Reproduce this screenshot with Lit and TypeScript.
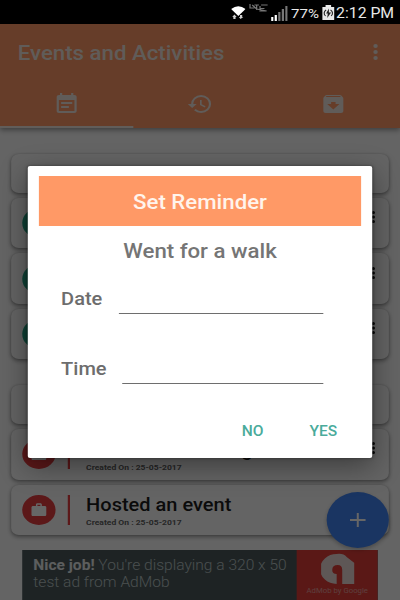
import { LitElement, html, css, svg } from "lit";
import { customElement } from "lit/decorators.js";

interface Row {
  kind: "heading" | "done" | "work";
  title?: string;
  created?: string;
}

const ROWS: Row[] = [
  { kind: "heading" },
  { kind: "done" },
  { kind: "done" },
  { kind: "done" },
  { kind: "heading" },
  { kind: "work", title: "Planned a meeting", created: "Created On : 25-05-2017" },
  { kind: "work", title: "Hosted an event", created: "Created On : 25-05-2017" },
];

const ICONS = {
  event: svg`<path d="M17 10H7v2h10v-2zm2-7h-1V1h-2v2H8V1H6v2H5c-1.11 0-1.99.9-1.99 2L3 19c0 1.1.89 2 2 2h14c1.1 0 2-.9 2-2V5c0-1.1-.9-2-2-2zm0 16H5V8h14v11zm-5-5H7v2h7v-2z"/>`,
  history: svg`<path d="M13 3a9 9 0 0 0-9 9H1l3.89 3.89.07.14L9 12H6c0-3.87 3.13-7 7-7s7 3.13 7 7-3.13 7-7 7c-1.93 0-3.68-.79-4.94-2.06l-1.42 1.42A8.954 8.954 0 0 0 13 21a9 9 0 0 0 0-18zm-1 5v5l4.28 2.54.72-1.21-3.5-2.08V8H12z"/>`,
  archive: svg`<path d="M20.540 5.230l-1.390-1.680C18.880 3.210 18.470 3 18 3H6c-.47 0-.88.21-1.160.55L3.460 5.230C3.170 5.570 3 6.020 3 6.500V19c0 1.100.9 2 2 2h14c1.100 0 2-.9 2-2V6.500c0-.48-.17-.93-.46-1.270zM12 17.500L6.500 12H10v-2h4v2h3.500L12 17.500zM5.120 5l.81-1h12l.94 1H5.120z"/>`,
  more: svg`<path d="M12 8a2 2 0 1 0 0-4 2 2 0 0 0 0 4zm0 2a2 2 0 1 0 0 4 2 2 0 0 0 0-4zm0 6a2 2 0 1 0 0 4 2 2 0 0 0 0-4z"/>`,
  work: svg`<path d="M20 6h-4V4c0-1.11-.89-2-2-2h-4c-1.110 0-2 .89-2 2v2H4c-1.110 0-1.990.89-1.990 2L2 19c0 1.110.89 2 2 2h16c1.110 0 2-.89 2-2V8c0-1.110-.89-2-2-2zm-6 0h-4V4h4v2z"/>`,
  plus: svg`<path d="M19 12.900h-6.100V19h-1.800v-6.100H5v-1.800h6.100V5h1.800v6.100H19z"/>`,
};

const icon = (name: keyof typeof ICONS, cls = "") =>
  html`<svg class="icon ${cls}" viewBox="0 0 24 24">${ICONS[name]}</svg>`;

@customElement("app-root")
export class AppRoot extends LitElement {
  static styles = css`
    :host {
      display: block;
      width: 400px;
      height: 600px;
      overflow: hidden;
      background: #000;
    }
    * { box-sizing: border-box; }
    .screen {
      position: relative;
      width: 360px;
      height: 600px;
      display: flex;
      flex-direction: column;
      transform: scaleX(1.11111);
      transform-origin: 0 0;
      font-family: Roboto, "Liberation Sans", sans-serif;
      overflow: hidden;
    }
    .icon { width: 24px; height: 24px; fill: currentColor; display: block; flex: none; }

    .status {
      height: 24px;
      flex: none;
      background: #000;
      color: #e8e8e8;
      display: flex;
      align-items: center;
      padding-left: 207.500px;
      line-height: 24px;
      white-space: nowrap;
    }
    .status > * { flex: none; }
    .wifi { width: 13px; height: 15px; margin-right: 3.500px; }
    .lte { width: 17px; height: 9px; margin: 0 3px 10px 0; }
    .bars { width: 15px; height: 15px; margin: 2px 3px 0 0; }
    .battery { width: 11px; height: 15px; margin-right: 2px; }
    .pct { font-size: 13.500px; width: 27.500px; padding-top: 1px; }
    .clock { font-size: 14.200px; padding-top: 1px; }

    .page { position: relative; flex: 1; background: #fafafa; display: flex; flex-direction: column; }
    .bar {
      flex: none;
      height: 104px;
      background: #ff9966;
      color: #fff;
      box-shadow: 0 2px 5px rgba(0, 0, 0, 0.4);
    }
    .toolbar { height: 56px; display: flex; align-items: center; justify-content: space-between; padding: 0 10px 0 16px; color: #f0e5df; }
    .name { font-size: 20px; font-weight: 500; padding-top: 2px; }
    .tabs { height: 48px; display: grid; grid-template-columns: repeat(3, 1fr); }
    .tab { display: flex; align-items: center; justify-content: center; color: #f0e5df; }
    .tab.on { border-bottom: 2px solid #f3e8e2; padding-top: 2px; }
    .list { padding: 26px 10px 0; display: flex; flex-direction: column; gap: 5px; }
    .card {
      height: 50.400px;
      border-radius: 7px;
      background: #fafafa;
      box-shadow: 0 2px 4px rgba(0, 0, 0, 0.38), 0 0 2px rgba(0, 0, 0, 0.16);
      display: flex;
      align-items: center;
      padding: 0 0 0 10px;
    }
    .card.heading { height: 39px; }
    .card.heading.next { margin-top: 21px; }
    .dot {
      width: 30px;
      height: 30px;
      border-radius: 50%;
      background: #e53c40;
      color: #fff;
      display: flex;
      align-items: center;
      justify-content: center;
    }
    .dot.done { background: #26a688; }
    .dot .icon { width: 16px; height: 16px; }
    .rule { width: 2px; height: 30px; margin: 0 15px 0 10.500px; background: #e53c40; }
    .body { flex: 1; }
    .what { font-size: 18px; line-height: 21px; font-weight: 500; color: #1c1c1c; padding-top: 3px; }
    .when { font-size: 7.700px; line-height: 11px; margin-top: 2px; font-weight: 700; color: #606060; }
    .menu { width: 18px; height: 18px; color: #111; margin: -12px 5px 0 auto; }

    .ad {
      position: absolute;
      left: 20px;
      bottom: 0;
      width: 320px;
      height: 50px;
      display: flex;
      background: #4b595b;
      color: #b9c4c5;
      overflow: hidden;
    }
    .copy { flex: 1; padding: 7px 0 0 10px; font-size: 14px; line-height: 17px; white-space: nowrap; font-weight: 300; }
    .copy b { font-weight: 700; color: #e6eaea; }
    .brand { flex: none; width: 73px; background: #e03e39; color: #ead9d8; display: flex; flex-direction: column; align-items: center; padding-top: 3px; }
    .brand svg { width: 30px; height: 32px; }
    .by { font-size: 7px; line-height: 9px; margin-top: 2px; color: #e99f9b; white-space: nowrap; }
    .fab {
      position: absolute;
      right: 10px;
      bottom: 52px;
      width: 56px;
      height: 56px;
      border-radius: 50%;
      background: #4285f4;
      color: #fff;
      display: flex;
      align-items: center;
      justify-content: center;
      box-shadow: 0 2px 4px rgba(0, 0, 0, 0.25);
    }
    .scrim { position: absolute; inset: 0; background: rgba(0, 0, 0, 0.6); }

    .dialog {
      position: absolute;
      left: 25px;
      top: 166px;
      width: 310px;
      height: 292px;
      border-radius: 2px;
      background: #fff;
      color: #757575;
      padding: 10px 10px 0;
      box-shadow: 0 8px 26px rgba(0, 0, 0, 0.4), 0 0 3px rgba(0, 0, 0, 0.4);
    }
    .banner {
      height: 50px;
      background: #ff9966;
      color: #fff4ec;
      font-size: 20px;
      font-weight: 500;
      line-height: 52px;
      text-align: center;
    }
    .subject { font-size: 20px; font-weight: 500; line-height: 24px; margin-top: 13px; text-align: center; }
    .field { display: flex; align-items: flex-end; padding: 0 34px 0 20px; height: 51px; font-size: 18px; font-weight: 500; color: #6d6d6d; }
    .field + .field { margin-top: 18.500px; }
    .field label { line-height: 24px; padding-bottom: 3px; white-space: nowrap; margin-right: 14.500px; }
    .field .input { flex: 1; border-bottom: 1px solid #6e6e6e; }
    .actions { display: flex; justify-content: flex-end; gap: 41.500px; margin-top: 37px; padding-right: 21.500px; font-size: 14px; line-height: 20px; font-weight: 500; color: #4aab9b; }
  `;

  private row(r: Row, i: number) {
    if (r.kind === "heading") return html`<div class="card heading ${i ? "next" : ""}"></div>`;
    return html`<div class="card">
      <div class="dot ${r.kind}">${icon("work")}</div>
      <div class="rule"></div>
      <div class="body">
        ${r.title ? html`<div class="what">${r.title}</div><div class="when">${r.created}</div>` : ""}
      </div>
      ${i < ROWS.length - 1 ? icon("more", "menu") : ""}
    </div>`;
  }

  render() {
    return html`<div class="screen">
      <div class="status">
        <svg class="wifi" viewBox="0 0 13 15" fill="#fff">
          <path d="M0 4Q6.500-1.500 13 4L6.500 11z" />
          <path d="M3 9.500l2 2.500H4v2H2v-2H1zM8.500 14l-1.500-2h1v-2h2v2h1z" opacity=".8" />
        </svg>
        <svg class="lte" viewBox="0 0 17 9" fill="none" stroke="#777" stroke-width="1.100">
          <path d="M1 1v4h4M5 2h4M7 2v5M10 3v5h4M10 5.500h4M11 2h6M3 2l4 4 9 2" />
        </svg>
        <svg class="bars" viewBox="0 0 15 15">
          <path fill="#fff" d="M0 11h2v4H0zM3.200 9h2v6h-2z" />
          <path fill="#777" d="M6.400 6h2v9h-2zM9.600 3h2v12h-2zM12.800 0h2v15h-2z" />
        </svg>
        <span class="pct">77%</span>
        <svg class="battery" viewBox="0 0 11 15">
          <path fill="#e8e8e8" d="M3 0h5v2h3v13H0V2h3z" />
          <path d="M3.500 5A3.800 3.800 0 0 0 3 11M7.500 5a3.800 3.800 0 0 1 .5 6" fill="none" stroke="#222" />
          <path fill="#222" d="M6 3.500L3.500 8.500H5L4.500 13 8 7.500H6z" />
        </svg>
        <span class="clock">2:12 PM</span>
      </div>

      <div class="page">
        <div class="bar">
          <div class="toolbar"><span class="name">Events and Activities</span>${icon("more")}</div>
          <div class="tabs">
            <div class="tab on">${icon("event")}</div>
            <div class="tab">${icon("history")}</div>
            <div class="tab">${icon("archive")}</div>
          </div>
        </div>
        <div class="list">${ROWS.map((r, i) => this.row(r, i))}</div>
        <div class="ad">
          <div class="copy"><b>Nice job!</b> You're displaying a 320 x 50<br />test ad from AdMob</div>
          <div class="brand">
            <svg viewBox="0 0 30 32">
              <path fill="currentColor" d="M14 31A15 15 0 0 1 14 1Q20 0 23 4l7 6v21H19V17q0-5-4-5-5 0-5 5 0 4 4 4z" />
            </svg>
            <div class="by">AdMob by Google</div>
          </div>
        </div>
        <div class="fab">${icon("plus")}</div>
        <div class="scrim"></div>
      </div>

      <div class="dialog">
        <div class="banner">Set Reminder</div>
        <div class="subject">Went for a walk</div>
        <div class="field"><label>Date</label><div class="input"></div></div>
        <div class="field"><label>Time</label><div class="input"></div></div>
        <div class="actions"><span>NO</span><span>YES</span></div>
      </div>
    </div>`;
  }
}
